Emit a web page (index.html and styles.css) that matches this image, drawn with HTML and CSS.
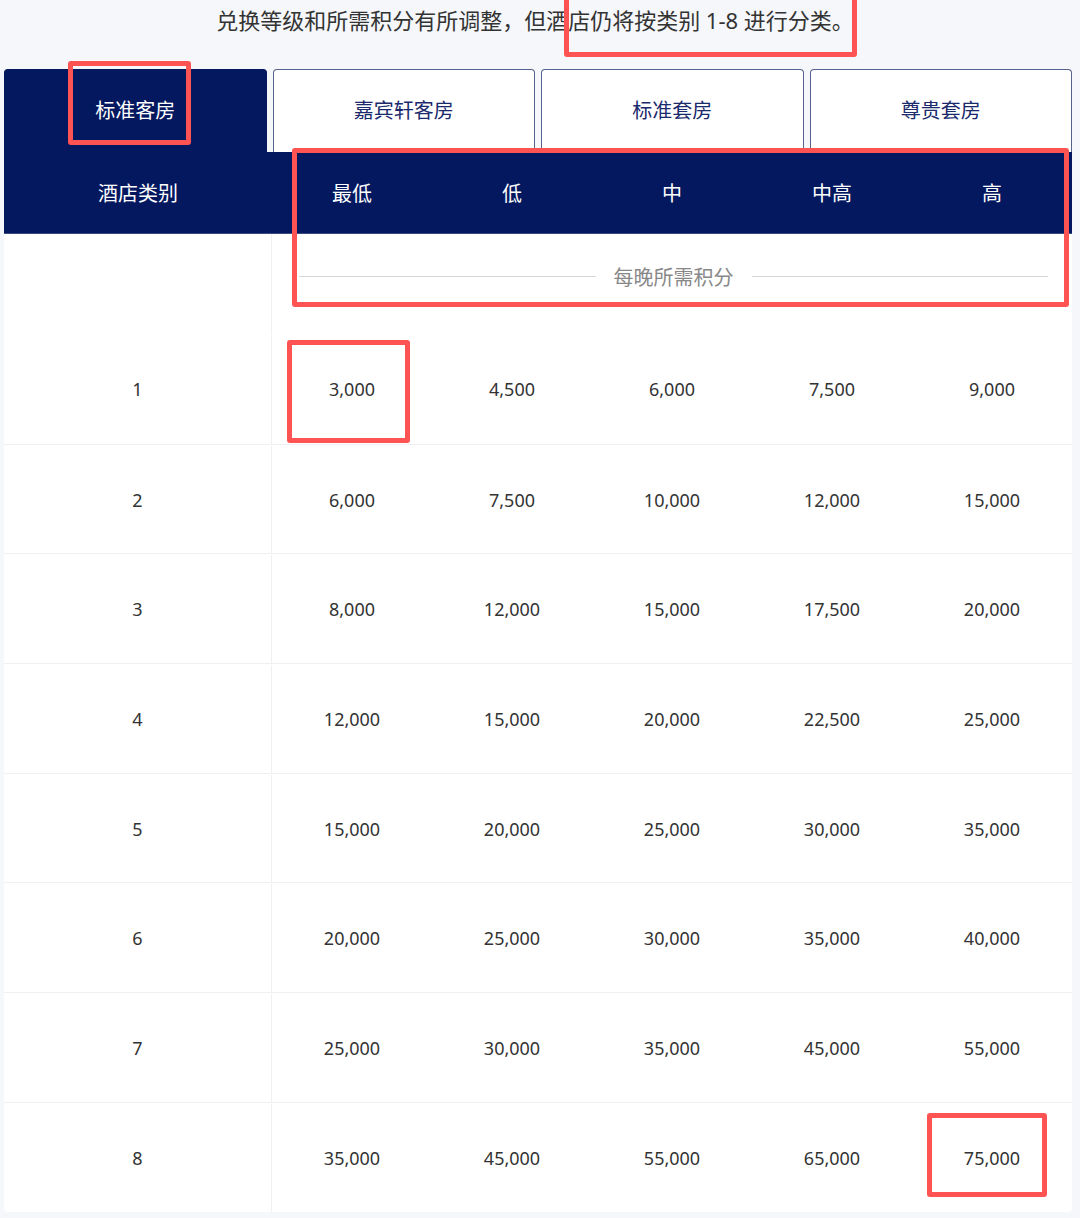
FILE: index.html
```html
<!DOCTYPE html>
<html lang="zh-CN">
<head>
<meta charset="utf-8">
<title>积分兑换表</title>
<link rel="stylesheet" href="styles.css">
</head>
<body>
<div class="page">
  <p class="intro">兑换等级和所需积分有所调整，但酒店仍将按类别 1-8 进行分类。</p>
  <div class="tabs">
    <div class="tab active">标准客房</div>
    <div class="tab">嘉宾轩客房</div>
    <div class="tab">标准套房</div>
    <div class="tab">尊贵套房</div>
  </div>
  <div class="card">
    <div class="head">
      <div>酒店类别</div><div>最低</div><div>低</div><div>中</div><div>中高</div><div>高</div>
    </div>
    <div class="sub">
      <div class="first"></div>
      <div class="label"><span>每晚所需积分</span></div>
    </div>
    <div class="row"><div class="first">1</div><div>3,000</div><div>4,500</div><div>6,000</div><div>7,500</div><div>9,000</div></div>
    <div class="row"><div class="first">2</div><div>6,000</div><div>7,500</div><div>10,000</div><div>12,000</div><div>15,000</div></div>
    <div class="row"><div class="first">3</div><div>8,000</div><div>12,000</div><div>15,000</div><div>17,500</div><div>20,000</div></div>
    <div class="row"><div class="first">4</div><div>12,000</div><div>15,000</div><div>20,000</div><div>22,500</div><div>25,000</div></div>
    <div class="row"><div class="first">5</div><div>15,000</div><div>20,000</div><div>25,000</div><div>30,000</div><div>35,000</div></div>
    <div class="row"><div class="first">6</div><div>20,000</div><div>25,000</div><div>30,000</div><div>35,000</div><div>40,000</div></div>
    <div class="row"><div class="first">7</div><div>25,000</div><div>30,000</div><div>35,000</div><div>45,000</div><div>55,000</div></div>
    <div class="row"><div class="first">8</div><div>35,000</div><div>45,000</div><div>55,000</div><div>65,000</div><div>75,000</div></div>
  </div>
  <div class="mark m-tab"></div>
  <div class="mark m-intro"></div>
  <div class="mark m-head"></div>
  <div class="mark m-first"></div>
  <div class="mark m-last"></div>
</div>
</body>
</html>
```
FILE: styles.css
```css
html, body {
  margin: 0;
  padding: 0;
  background: #f5f7fa;
}
body {
  font-family: "Noto Sans", "Noto Sans CJK SC", sans-serif;
  color: #333;
}
.page {
  position: relative;
  width: 1068px;
  padding: 0 8px 0 4px;
  height: 1218px;
  overflow: hidden;
}
.intro {
  margin: 0;
  height: 40px;
  line-height: 40px;
  font-size: 22px;
  text-align: center;
  color: #333;
  padding-right: 6px;
}
.tabs {
  display: flex;
  gap: 6px;
  margin-top: 29px;
  height: 83px;
}
.tab {
  flex: 1;
  display: flex;
  align-items: center;
  justify-content: center;
  box-sizing: border-box;
  padding-bottom: 4px;
  background: #fff;
  border: 1px solid #58628f;
  border-bottom: none;
  border-radius: 4px 4px 0 0;
  color: #1a2a6c;
  font-size: 20px;
}
.tab.active {
  background: #03185f;
  border-color: #03185f;
  color: #fff;
}
.card {
  background: #fff;
  border-radius: 0 0 4px 4px;
  overflow: hidden;
}
.head, .row {
  display: grid;
  grid-template-columns: 268px repeat(5, 160px);
  text-align: center;
  align-items: center;
}
.head {
  height: 82px;
  box-sizing: border-box;
  background: #03185f;
  border-bottom: 1px solid #3c4a82;
  color: #fff;
  font-size: 20px;
}
.sub {
  display: grid;
  grid-template-columns: 268px 1fr;
  height: 100px;
}
.first {
  border-right: 1px solid #f0f0f2;
  height: 100%;
  box-sizing: border-box;
  display: flex;
  align-items: center;
  justify-content: center;
}
.label {
  display: flex;
  align-items: center;
  gap: 18px;
  height: 26px;
  margin-top: 29px;
  padding: 0 24px 0 27px;
  color: #888;
  font-size: 20px;
}
.label::before, .label::after {
  content: "";
  flex: 1;
  height: 1px;
  background: #d6d6d6;
}
.row {
  height: 109.7px;
  box-sizing: border-box;
  padding-top: 1px;
  font-size: 18px;
  color: #333;
}
.row + .row {
  border-top: 1px solid #f0f0f2;
}
.mark {
  position: absolute;
  box-sizing: border-box;
  border: 5px solid #fd5353;
  border-radius: 3px;
}
.m-tab { left: 68px; top: 61px; width: 123px; height: 84px; }
.m-intro { left: 564px; top: -8px; width: 293px; height: 65px; }
.m-head { left: 292px; top: 148px; width: 777px; height: 159px; }
.m-first { left: 287px; top: 340px; width: 123px; height: 103px; }
.m-last { left: 927px; top: 1113px; width: 120px; height: 84px; }
```
